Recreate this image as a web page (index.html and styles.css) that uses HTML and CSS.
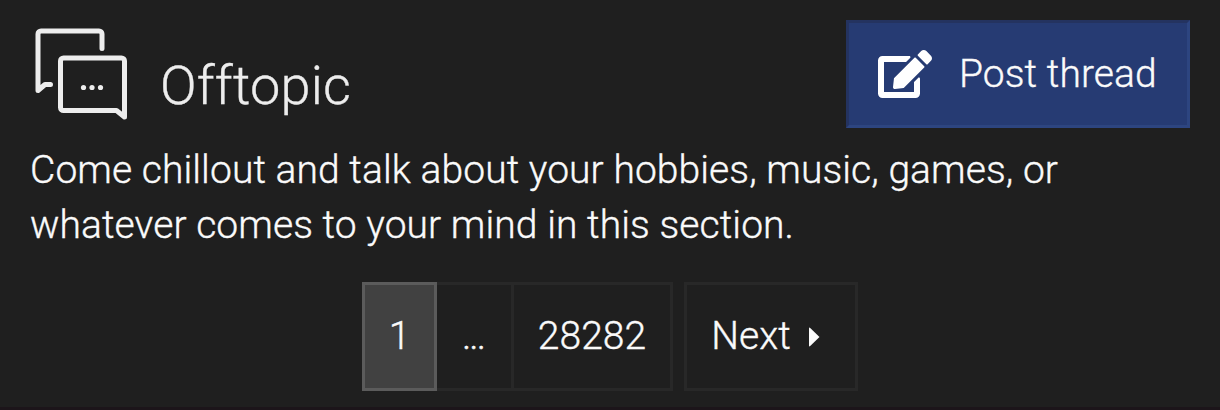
FILE: index.html
```
<!DOCTYPE html>
<html lang="en">
<head>
    <meta charset="UTF-8">
    <meta name="viewport" content="width=device-width, initial-scale=1.0">
    <title>Offtopic</title>
    <link rel="stylesheet" href="styles.css">
</head>
<body>
    <div class="forum-header">
        <div class="title-row">
            <svg class="forum-icon" viewBox="0 0 96 96">
                <path d="M70 20.500V6a3 3 0 0 0-3-3H9a3 3 0 0 0-3 3V62.500l7-6H18.500"/>
                <path d="M31.500 30H89.500a3 3 0 0 1 3 3V89l-8-6.500H31.500a3 3 0 0 1-3-3V33a3 3 0 0 1 3-3z"/>
                <circle cx="51.500" cy="59.500" r="2.600"/>
                <circle cx="60" cy="59.500" r="2.600"/>
                <circle cx="68.500" cy="59.500" r="2.600"/>
            </svg>
            <h1 class="title">Offtopic</h1>
            <a class="post-button" href="#">
                <svg class="edit-icon" viewBox="0 0 576 512">
                    <path d="M402.600 83.200l90.200 90.200c3.800 3.800 3.800 10 0 13.800L274.400 405.600l-92.800 10.300c-12.400 1.400-22.900-9.100-21.500-21.500l10.300-92.800L388.800 83.200c3.800-3.800 10-3.800 13.800 0zm162-22.900l-48.800-48.800c-15.200-15.200-39.900-15.200-55.200 0l-35.400 35.400c-3.800 3.800-3.800 10 0 13.800l90.200 90.200c3.800 3.800 10 3.800 13.800 0l35.400-35.400c15.200-15.300 15.200-40 0-55.200zM384 346.200V448H64V128h229.800c3.200 0 6.200-1.300 8.500-3.500l40-40c7.600-7.600 2.200-20.500-8.500-20.500H48C21.500 64 0 85.500 0 112v352c0 26.500 21.500 48 48 48h352c26.500 0 48-21.500 48-48V306.200c0-10.700-12.900-16-20.500-8.500l-40 40c-2.200 2.300-3.500 5.300-3.500 8.500z"/>
                </svg>
                <span>Post thread</span>
            </a>
        </div>
        <p class="description">Come chillout and talk about your hobbies, music, games, or whatever comes to your mind in this section.</p>
        <div class="pagination">
            <div class="pages">
                <a class="page active" href="#">1</a>
                <a class="page dots" href="#">...</a>
                <a class="page last" href="#">28282</a>
            </div>
            <a class="next" href="#">
                <span>Next</span>
                <svg class="arrow" viewBox="0 0 12 20">
                    <path d="M1 1.500Q1 0 2.200 1L11.500 10L2.200 19Q1 20 1 18.500z"/>
                </svg>
            </a>
        </div>
    </div>
</body>
</html>
```
FILE: styles.css
```
* {
    box-sizing: border-box;
}

body {
    margin: 0;
    height: 410px;
    overflow: hidden;
    background-color: #1f1f1f;
    color: #fafafa;
    font-family: Roboto, "Liberation Sans", sans-serif;
    font-weight: 300;
    font-size: 39px;
    line-height: 55px;
    letter-spacing: 0.07px;
    -webkit-text-stroke: 0.35px;
}

a {
    color: inherit;
    text-decoration: none;
}

.forum-header {
    height: 410px;
    padding: 20px 30px 0;
    border-bottom: 3px solid #1c151a;
}

/* title and post button */
.title-row {
    display: flex;
    height: 108px;
}

.forum-icon {
    width: 96px;
    height: 96px;
    margin: 8px 0 0 2px;
    fill: none;
    stroke: #ededed;
    stroke-width: 5;
    stroke-linecap: round;
    stroke-linejoin: round;
}

.forum-icon circle {
    fill: #ededed;
    stroke: none;
}

.title {
    margin: 30px 0 0 32px;
    font-size: 54px;
    font-weight: 300;
    line-height: 72px;
    letter-spacing: 0.2px;
    color: #ededed;
}

.post-button {
    display: flex;
    align-items: center;
    width: 344px;
    height: 108px;
    margin-left: auto;
    padding-left: 29px;
    background-color: #263b73;
    border: 3px solid;
    border-color: #243360 #2d4580 #2d4580 #243360;
}

.edit-icon {
    width: 54px;
    height: 48px;
    margin-right: 27px;
    fill: #fff;
}

/* forum description */
.description {
    margin: 15px 0 0;
}

/* page navigation */
.pagination {
    display: flex;
    justify-content: center;
    gap: 11px;
    margin-top: 29px;
}

.pages {
    display: flex;
}

.page,
.next {
    display: flex;
    align-items: center;
    justify-content: center;
    height: 109px;
    border: 3px solid #282828;
}

.page.active {
    width: 75px;
    background-color: #414141;
    border-color: #5b5b5b;
}

.page.dots {
    width: 74px;
    padding-right: 2px;
    border-left: 0;
    border-right: 0;
    letter-spacing: -2px;
}

.page.last {
    width: 162px;
}

.next {
    width: 174px;
    padding-right: 11px;
    gap: 17px;
}

.arrow {
    width: 12px;
    height: 20px;
    fill: #fafafa;
}
```
